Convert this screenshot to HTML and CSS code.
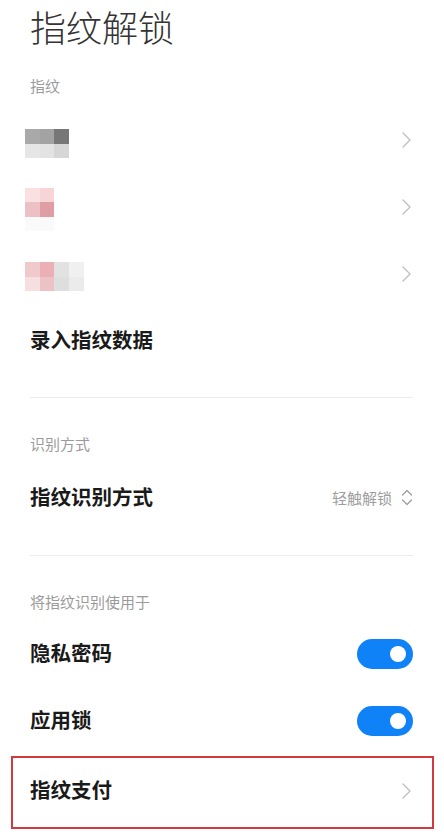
FILE: index.html
```html
<!DOCTYPE html>
<html lang="zh-CN">
<head>
<meta charset="utf-8">
<title>指纹解锁</title>
<link rel="stylesheet" href="styles.css">
</head>
<body>
<div class="page">
  <h1 class="title">指纹解锁</h1>

  <div class="label first">指纹</div>
  <div class="list">
    <div class="row">
      <div class="thumb t1">
        <span class="px a1"></span><span class="px a2"></span><span class="px a3"></span>
        <span class="px a4"></span><span class="px a5"></span><span class="px a6"></span>
      </div>
      <svg class="chev" width="9" height="16" viewBox="0 0 9 16"><path d="M1 1 L8 8 L1 15" fill="none" stroke="#bdbdbd" stroke-width="1.3" stroke-linecap="round" stroke-linejoin="round"/></svg>
    </div>
    <div class="row">
      <div class="thumb t2">
        <span class="px b1"></span><span class="px b2"></span>
        <span class="px b3"></span><span class="px b4"></span>
        <span class="px b5"></span><span class="px b5"></span>
      </div>
      <svg class="chev" width="9" height="16" viewBox="0 0 9 16"><path d="M1 1 L8 8 L1 15" fill="none" stroke="#bdbdbd" stroke-width="1.3" stroke-linecap="round" stroke-linejoin="round"/></svg>
    </div>
    <div class="row">
      <div class="thumb t3">
        <span class="px c1"></span><span class="px c2"></span><span class="px c3"></span><span class="px c4"></span>
        <span class="px c5"></span><span class="px c6"></span><span class="px c7"></span><span class="px c8"></span>
      </div>
      <svg class="chev" width="9" height="16" viewBox="0 0 9 16"><path d="M1 1 L8 8 L1 15" fill="none" stroke="#bdbdbd" stroke-width="1.3" stroke-linecap="round" stroke-linejoin="round"/></svg>
    </div>
    <div class="row">
      <span class="row-text">录入指纹数据</span>
    </div>
  </div>

  <div class="divider"></div>

  <div class="label">识别方式</div>
  <div class="list">
    <div class="row">
      <span class="row-text">指纹识别方式</span>
      <span class="value">轻触解锁
        <svg class="updown" width="12" height="17" viewBox="0 0 12 17"><path d="M1.5 6 L6 1.5 L10.5 6 M1.5 11 L6 15.5 L10.5 11" fill="none" stroke="#9e9e9e" stroke-width="1.3" stroke-linecap="round" stroke-linejoin="round"/></svg>
      </span>
    </div>
  </div>

  <div class="divider second"></div>

  <div class="label">将指纹识别使用于</div>
  <div class="list tight">
    <div class="row">
      <span class="row-text">隐私密码</span>
      <span class="toggle"><span class="knob"></span></span>
    </div>
    <div class="row">
      <span class="row-text">应用锁</span>
      <span class="toggle"><span class="knob"></span></span>
    </div>
    <div class="row highlight">
      <span class="row-text">指纹支付</span>
      <svg class="chev" width="9" height="16" viewBox="0 0 9 16"><path d="M1 1 L8 8 L1 15" fill="none" stroke="#bdbdbd" stroke-width="1.3" stroke-linecap="round" stroke-linejoin="round"/></svg>
    </div>
  </div>
</div>
</body>
</html>
```

FILE: styles.css
```css
* { box-sizing: border-box; }

body {
  margin: 0;
  background: #ffffff;
  font-family: "Noto Sans CJK SC", "Noto Sans", sans-serif;
}

.page {
  padding: 2px 31px 0 30px;
}

.title {
  margin: 0;
  font-size: 36px;
  line-height: 48px;
  font-weight: 300;
  color: #333333;
}

.label {
  font-size: 15px;
  line-height: 20px;
  color: #9b9b9b;
  margin-top: 36px;
}

.label.first {
  margin-top: 26px;
}

.list {
  margin-top: 10px;
}

.list.tight {
  margin-top: 8px;
}

.row {
  display: flex;
  align-items: center;
  justify-content: space-between;
  height: 67px;
}

.row-text {
  font-size: 20.5px;
  line-height: 28px;
  font-weight: 700;
  color: #1a1a1a;
  margin-bottom: 4px;
}

.chev {
  display: block;
  margin-right: 2px;
}

.divider {
  height: 1px;
  background: #ececec;
  margin-top: 23px;
}

.divider.second {
  margin-top: 24px;
}

.value {
  display: flex;
  align-items: center;
  font-size: 15px;
  color: #9e9e9e;
}

.updown {
  display: block;
  margin-left: 9px;
}

.toggle {
  position: relative;
  display: block;
  width: 56px;
  height: 30px;
  border-radius: 15px;
  background: #0f82f7;
}

.knob {
  position: absolute;
  right: 7px;
  top: 7px;
  width: 16px;
  height: 16px;
  border-radius: 50%;
  background: #ffffff;
}

.highlight {
  height: 73px;
  margin: 2px -21px 0 -19px;
  padding: 0 19px 4px 17px;
  border: 2px solid #d23a3f;
}

/* pixelated (mosaic) fingerprint names */
.thumb {
  display: grid;
  grid-auto-rows: 14.5px;
  margin-left: -5px;
}

.t1 { grid-template-columns: repeat(3, 14.7px); margin-top: 8px; }
.t2 { grid-template-columns: repeat(2, 14.7px); margin-top: 6px; }
.t3 { grid-template-columns: repeat(4, 14.7px); margin-top: 6px; }

.px { display: block; }

.a1 { background: #a9a9a9; }
.a2 { background: #a3a3a3; }
.a3 { background: #777777; }
.a4 { background: #e6e6e6; }
.a5 { background: #e3e3e3; }
.a6 { background: #d6d6d6; }

.b1 { background: #fbe0e2; }
.b2 { background: #f7d5d7; }
.b3 { background: #ecc0c4; }
.b4 { background: #de9ea3; }
.b5 { background: #fafafa; }

.c1 { background: #efc9cc; }
.c2 { background: #eab0b5; }
.c3 { background: #e2e2e2; }
.c4 { background: #f0f0f0; }
.c5 { background: #f6dfe1; }
.c6 { background: #ecc2c6; }
.c7 { background: #dedede; }
.c8 { background: #ebebeb; }
```
